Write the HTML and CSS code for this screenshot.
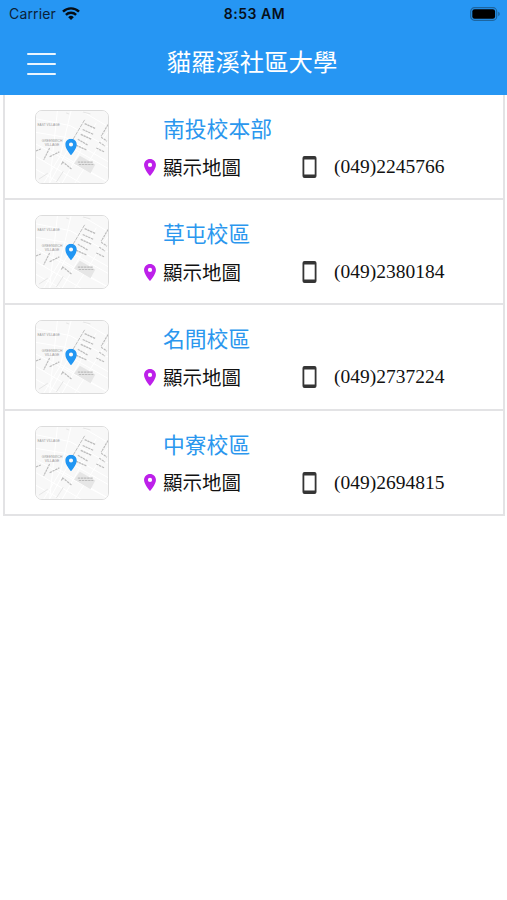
FILE: index.html
```html
<!DOCTYPE html>
<html lang="zh-Hant">
<head>
<meta charset="utf-8">
<meta name="viewport" content="width=device-width, initial-scale=1">
<title>貓羅溪社區大學</title>
<link rel="stylesheet" href="styles.css">
</head>
<body>
<svg class="defs" aria-hidden="true">
  <symbol id="pin" viewBox="5 2 14 20">
    <path fill-rule="evenodd" d="M12 2C8.13 2 5 5.13 5 9c0 5.25 7 13 7 13s7-7.75 7-13c0-3.87-3.13-7-7-7zm0 9.500a2.500 2.500 0 1 1 0-5 2.500 2.500 0 0 1 0 5z"/>
  </symbol>
  <symbol id="phone" viewBox="5 1 14 22">
    <path fill-rule="evenodd" d="M17 1H7a2 2 0 0 0-2 2v18a2 2 0 0 0 2 2h10a2 2 0 0 0 2-2V3a2 2 0 0 0-2-2zm.2 18.500H6.800V4.500h10.400z"/>
  </symbol>
  <symbol id="map" viewBox="0 0 74 74">
    <rect width="74" height="74" fill="#f8f8f8"/>
    <g fill="none" stroke="#fff" stroke-width="1">
      <path d="M0 22 30 27 74 52M0 8l35 7L74 37M22 0 14 74M36 0 25 46 8 74M50 8 14 74M62 12 27 74M74 21 40 74M30 34l44 25M24 44l50 29M0 34l74 39M0 47l46 27M0 60l25 14M47 0l27 16"/>
    </g>
    <path d="m45 46 16 9-5 9-17-10z" fill="#e6e6e6"/>
    <g fill="none" stroke="#bcbcbc" stroke-width="1">
      <path d="M50 9 37 31" stroke-dasharray="4 .7"/>
      <path d="m50 13 11 5M48 19l11 5M46 24l11 5M43 29l10 6M41 35l11 5" stroke-width="1.300" stroke-dasharray="2.500 .6"/>
      <path d="m74 14-7 12M67 27l6 4M65 32l6 4M62 38l8 4" stroke-width="1.200" stroke-dasharray="2.500 .7"/>
      <path d="m14 38-6 12M14 47l10-5M0 41l5-2M27 52l10 8M26 55l2-3M43 52.500h16M44 55h15" stroke-width="1.200" stroke-dasharray="2.500 .7"/>
      <path d="m31 2 3 1m14-2 8 2M3 70l9-6m9 9 7-11" stroke="#e4e4e4"/>
    </g>
  </symbol>
</svg>

<header class="header">
  <div class="status">
    <div class="carrier">
      <span>Carrier</span>
      <svg class="wifi" viewBox="0 0 18 13">
        <g fill="none" stroke="#060d14" stroke-width="2.400">
          <path d="M1 4.700a11.300 11.300 0 0 1 16 0M3.900 7.900a7.200 7.200 0 0 1 10.200 0"/>
        </g>
        <path d="M6.200 10.200a4 4 0 0 1 5.600 0L9 13z" fill="#060d14"/>
      </svg>
    </div>
    <span class="time">8:53 AM</span>
    <svg class="battery" viewBox="0 0 30 14">
      <rect x=".7" y=".7" width="26" height="12.600" rx="3.800" fill="none" stroke="#1d659f" stroke-width="1.200"/>
      <rect x="2.300" y="2.300" width="22.800" height="9.400" rx="2.300" fill="#000"/>
      <path d="M28.200 4.800q1.600.6 1.600 2.200t-1.600 2.200z" fill="#1d659f"/>
    </svg>
  </div>
  <div class="navbar">
    <button class="menu" aria-label="選單"><i></i><i></i><i></i></button>
    <h1>貓羅溪社區大學</h1>
  </div>
</header>

<main class="list">
  <article class="row">
    <svg class="thumb" viewBox="0 0 74 74">
      <use href="#map"/>
      <text x="1.500" y="15.500" textLength="23" lengthAdjust="spacingAndGlyphs">EAST VILLAGE</text>
      <text x="6" y="32" textLength="21" lengthAdjust="spacingAndGlyphs">GREENWICH</text>
      <text x="9" y="36" textLength="15" lengthAdjust="spacingAndGlyphs">VILLAGE</text>
      <use href="#pin" x="30" y="28.500" width="12" height="17" fill="#2196f3"/>
    </svg>
    <div class="info">
      <h2>南投校本部</h2>
      <div class="links">
        <a class="show-map"><svg class="pin"><use href="#pin"/></svg><span>顯示地圖</span></a>
        <a class="tel"><svg class="phone"><use href="#phone"/></svg>(049)2245766</a>
      </div>
    </div>
  </article>
  <article class="row">
    <svg class="thumb" viewBox="0 0 74 74">
      <use href="#map"/>
      <text x="1.500" y="15.500" textLength="23" lengthAdjust="spacingAndGlyphs">EAST VILLAGE</text>
      <text x="6" y="32" textLength="21" lengthAdjust="spacingAndGlyphs">GREENWICH</text>
      <text x="9" y="36" textLength="15" lengthAdjust="spacingAndGlyphs">VILLAGE</text>
      <use href="#pin" x="30" y="28.500" width="12" height="17" fill="#2196f3"/>
    </svg>
    <div class="info">
      <h2>草屯校區</h2>
      <div class="links">
        <a class="show-map"><svg class="pin"><use href="#pin"/></svg><span>顯示地圖</span></a>
        <a class="tel"><svg class="phone"><use href="#phone"/></svg>(049)2380184</a>
      </div>
    </div>
  </article>
  <article class="row">
    <svg class="thumb" viewBox="0 0 74 74">
      <use href="#map"/>
      <text x="1.500" y="15.500" textLength="23" lengthAdjust="spacingAndGlyphs">EAST VILLAGE</text>
      <text x="6" y="32" textLength="21" lengthAdjust="spacingAndGlyphs">GREENWICH</text>
      <text x="9" y="36" textLength="15" lengthAdjust="spacingAndGlyphs">VILLAGE</text>
      <use href="#pin" x="30" y="28.500" width="12" height="17" fill="#2196f3"/>
    </svg>
    <div class="info">
      <h2>名間校區</h2>
      <div class="links">
        <a class="show-map"><svg class="pin"><use href="#pin"/></svg><span>顯示地圖</span></a>
        <a class="tel"><svg class="phone"><use href="#phone"/></svg>(049)2737224</a>
      </div>
    </div>
  </article>
  <article class="row">
    <svg class="thumb" viewBox="0 0 74 74">
      <use href="#map"/>
      <text x="1.500" y="15.500" textLength="23" lengthAdjust="spacingAndGlyphs">EAST VILLAGE</text>
      <text x="6" y="32" textLength="21" lengthAdjust="spacingAndGlyphs">GREENWICH</text>
      <text x="9" y="36" textLength="15" lengthAdjust="spacingAndGlyphs">VILLAGE</text>
      <use href="#pin" x="30" y="28.500" width="12" height="17" fill="#2196f3"/>
    </svg>
    <div class="info">
      <h2>中寮校區</h2>
      <div class="links">
        <a class="show-map"><svg class="pin"><use href="#pin"/></svg><span>顯示地圖</span></a>
        <a class="tel"><svg class="phone"><use href="#phone"/></svg>(049)2694815</a>
      </div>
    </div>
  </article>
</main>
</body>
</html>
```
FILE: styles.css
```css
* { box-sizing: border-box; }

body {
  margin: 0;
  background: #fff;
  font-family: "Liberation Serif", "Noto Sans CJK TC", serif;
}

svg { display: block; flex: none; }
.defs { display: none; }

h1, h2 { margin: 0; font-weight: 400; white-space: nowrap; }

.header {
  height: 95px;
  background: #2696f3;
}

.status {
  display: grid;
  grid-template-columns: 1fr auto 1fr;
  align-items: center;
  height: 27px;
  padding: 0 7px 0 9px;
  font-family: Inter, sans-serif;
  color: #0b2238;
}

.carrier {
  display: flex;
  align-items: center;
  gap: 6px;
  font-size: 14px;
  letter-spacing: 0.15px;
}

.wifi { width: 18px; height: 13px; }

.time {
  font-size: 14px;
  font-weight: 600;
  letter-spacing: 0.5px;
  color: #06101a;
}

.battery { width: 30px; height: 14px; justify-self: end; }

.navbar {
  display: grid;
  grid-template-columns: 84px 1fr 87px;
  align-items: center;
  height: 68px;
}

.menu {
  display: flex;
  flex-direction: column;
  gap: 8px;
  width: 29px;
  margin: 6px 0 0 27px;
  padding: 0;
  border: 0;
  background: none;
}

.menu i { width: 100%; height: 2px; border-radius: 1px; background: #eaf5ff; }

.navbar h1 {
  padding-top: 3px;
  font-size: 24.4px;
  line-height: 36px;
  text-align: center;
  color: #fff;
}

.list {
  margin: 0 2px 0 3px;
  border: solid #e3e3e5;
  border-width: 0 2px;
}

.row {
  display: flex;
  height: 105.2px;
  padding: 15px 0 0 30px;
  border-bottom: 2px solid #e3e3e5;
}

.thumb {
  width: 74px;
  height: 74px;
  border: 1.5px solid #dcdcdc;
  border-radius: 7px;
}

.thumb text {
  font-family: "Liberation Sans", sans-serif;
  font-size: 3.6px;
  fill: #999;
}

.info { margin-left: 35px; }

.info h2 {
  margin-left: 19px;
  padding-top: 1px;
  font-size: 21.8px;
  line-height: 38px;
  color: #2b97ee;
}

.links {
  display: flex;
  align-items: center;
  height: 36px;
  font-size: 19.5px;
  color: #111;
}

.show-map, .tel { display: flex; align-items: center; white-space: nowrap; }
.show-map { width: 158px; gap: 7px; }
.show-map span { padding-bottom: 2px; }
.tel { gap: 17px; }
.pin { width: 12px; height: 17px; fill: #bd20ea; }
.phone { width: 15px; height: 22px; fill: #353535; }
```
